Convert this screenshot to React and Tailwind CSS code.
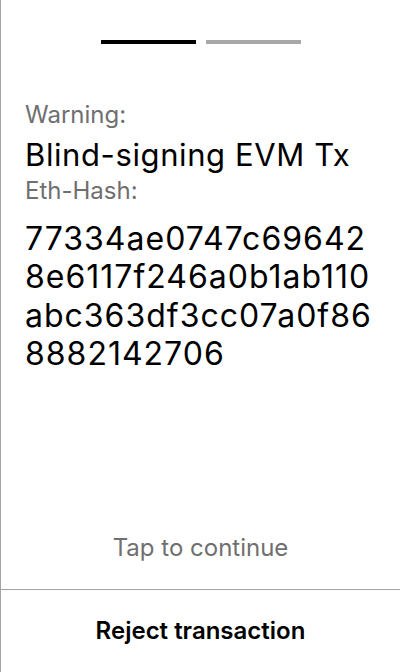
const HASH_LINES = [
  '77334ae0747c69642',
  '8e6117f246a0b1ab110',
  'abc363df3cc07a0f86',
  '8882142706',
];

export default function App() {
  return (
    <div className="flex h-[672px] w-[400px] flex-col overflow-hidden border-l border-[#a3a3a3] bg-white font-['Inter',sans-serif] text-black">
      {/* progress */}
      <div className="flex justify-center gap-[10px] pt-[40px]">
        <span className="h-[4px] w-[95px] bg-black" />
        <span className="h-[4px] w-[95px] bg-[#a8a8a8]" />
      </div>

      <main className="px-[24px]">
        <p className="mt-[55px] text-[24px] leading-[32px] text-[#6f6f6f]">Warning:</p>
        <p className="mt-[6px] text-[31px] leading-[36px] tracking-[0.6px]">Blind-signing EVM Tx</p>
        <p className="mt-[2px] text-[24px] leading-[32px] text-[#6f6f6f]">Eth-Hash:</p>
        <div className="mt-[13px] text-[32px] leading-[38.3px] tracking-[1px]">
          {HASH_LINES.map((l) => (
            <div key={l}>{l}</div>
          ))}
        </div>
      </main>

      <div className="flex-1" />
      <p className="mb-[25px] text-center text-[24px] leading-[32px] text-[#6f6f6f]">Tap to continue</p>

      <footer className="flex h-[83px] items-center justify-center border-t border-[#a3a3a3]">
        <span className="text-[24px] font-semibold leading-[32px]">Reject transaction</span>
      </footer>
    </div>
  );
}
